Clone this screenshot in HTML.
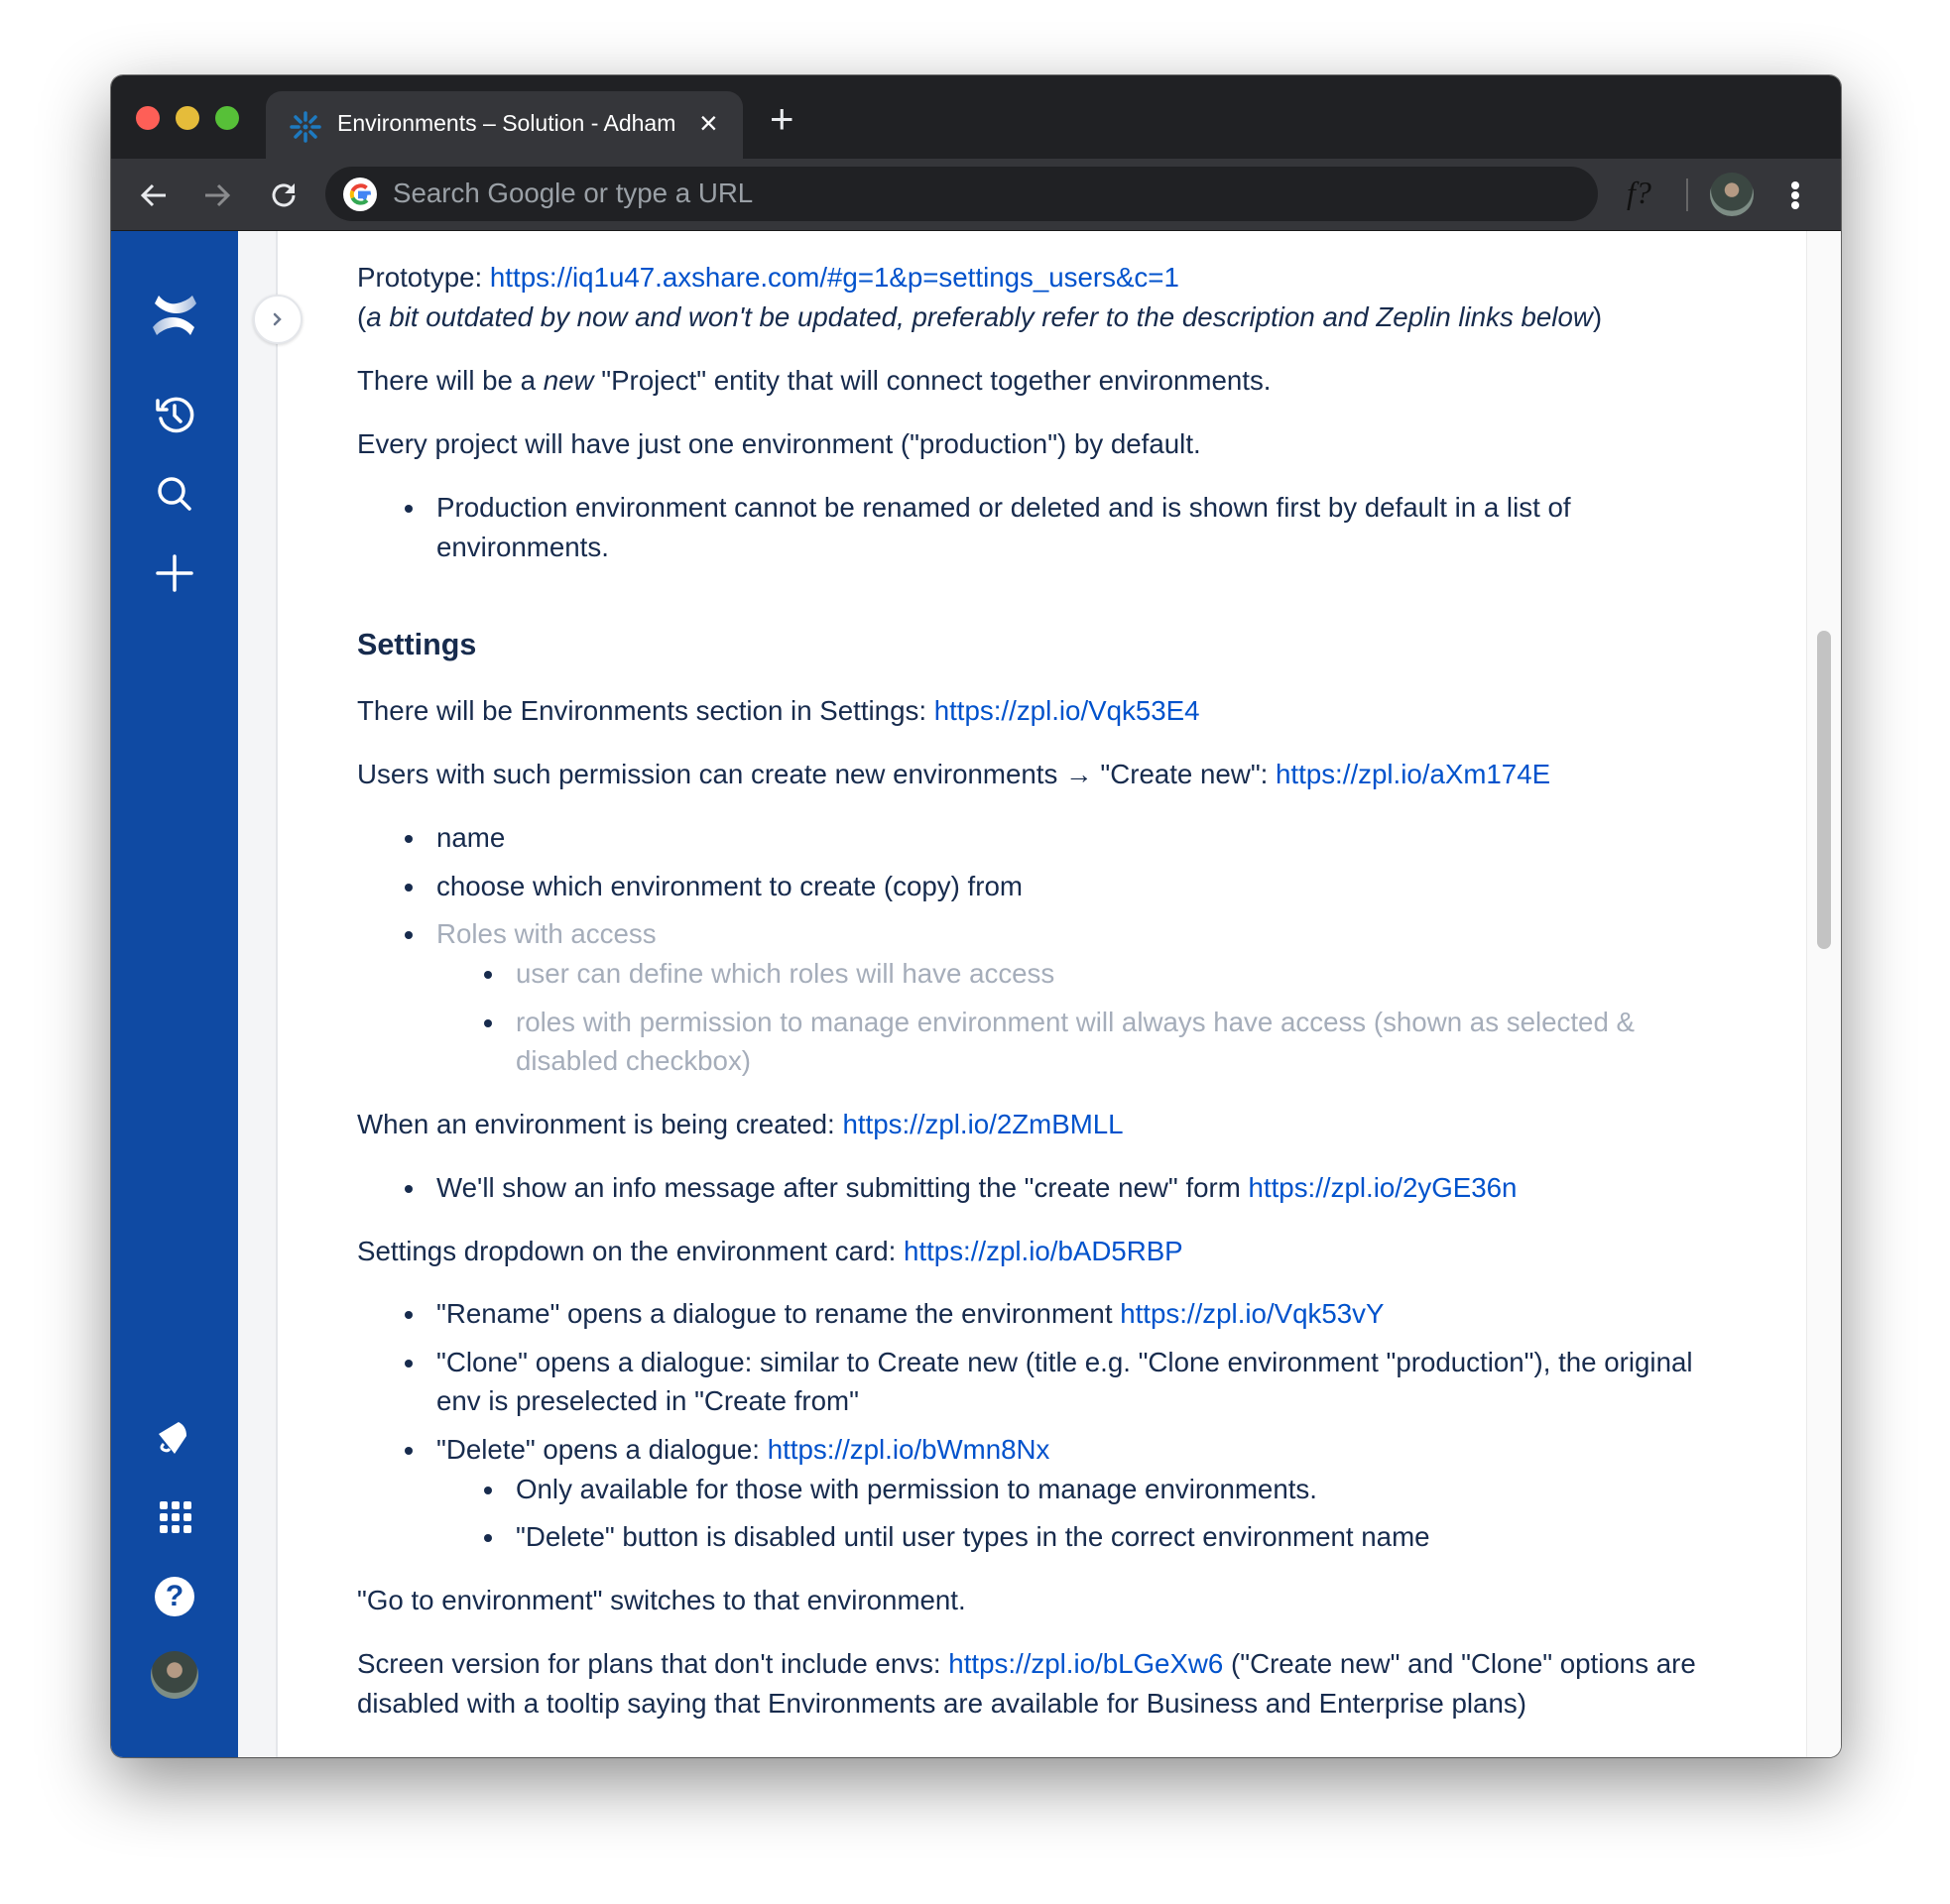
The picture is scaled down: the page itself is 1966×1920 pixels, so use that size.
<!DOCTYPE html>
<html><head><meta charset="utf-8">
<style>
*{margin:0;padding:0;box-sizing:border-box}
body{width:1966px;height:1920px;background:#fff;position:relative;overflow:hidden;font-family:"Liberation Sans",Arial,sans-serif}
.win{position:absolute;left:112px;top:76px;width:1744px;height:1696px;border-radius:12px;overflow:hidden;background:#fff;box-shadow:0 24px 70px rgba(0,0,0,.45),0 0 0 1px rgba(0,0,0,.5)}
.title{position:absolute;left:0;top:0;width:100%;height:84px;background:#202124}
.tab{position:absolute;left:156px;top:16px;width:481px;height:70px;background:#35363a;border-radius:16px 16px 0 0}
.toolbar{position:absolute;left:0;top:84px;width:100%;height:73px;background:#35363a;border-bottom:1px solid #1a1a1a}
.light{position:absolute;top:31px;width:24px;height:24px;border-radius:50%}
.omni{position:absolute;left:216px;top:8px;width:1283px;height:55px;border-radius:28px;background:#202124}
.side{position:absolute;left:0;top:157px;width:128px;height:1539px;background:#0f4aa3}
.strip{position:absolute;left:128px;top:157px;width:40px;height:1539px;background:#f4f5f7;border-right:2px solid #e4e6ea}
.content{position:absolute;left:168px;top:157px;width:1541px;height:1539px;background:#fff}
.track{position:absolute;left:1709px;top:157px;width:35px;height:1539px;background:#fafafa;border-left:1px solid #eaeaea}
.thumb{position:absolute;left:1720px;top:560px;width:14px;height:321px;border-radius:7px;background:#c3c3c3}
.l{position:absolute;font-size:27.7px;line-height:40px;color:#172b4d;white-space:nowrap}
.l a{color:#0052cc;text-decoration:none}
.g{color:#a5adba}
.b::before{content:"";position:absolute;left:-32px;top:17px;width:8px;height:8px;border-radius:50%;background:#172b4d}
h2{position:absolute;left:248px;font-size:30.5px;line-height:40px;color:#172b4d;font-weight:bold}
</style></head><body>
<div class="win">
 <div class="title">
  <div class="light" style="left:25px;background:#fe5f57"></div>
  <div class="light" style="left:65px;background:#e5bc3a"></div>
  <div class="light" style="left:105px;background:#57c038"></div>
  <div class="tab">
   <svg style="position:absolute;left:24px;top:20px" width="32" height="32" viewBox="0 0 32 32"><g stroke="#1e7ac0" stroke-width="3.5" stroke-linecap="round"><line x1="16" y1="2" x2="16" y2="9"/><line x1="16" y1="23" x2="16" y2="30"/><line x1="2" y1="16" x2="9" y2="16"/><line x1="23" y1="16" x2="30" y2="16"/><line x1="6" y1="6" x2="11" y2="11"/><line x1="21" y1="21" x2="26" y2="26"/><line x1="26" y1="6" x2="21" y2="11"/><line x1="11" y1="21" x2="6" y2="26"/></g><circle cx="16" cy="16" r="2.5" fill="#1e7ac0"/></svg>
   <div style="position:absolute;left:72px;top:19px;font-size:23px;color:#fff;white-space:nowrap;width:350px;overflow:hidden">Environments – Solution - Adham</div>
   <div style="position:absolute;left:437px;top:14px;font-size:32px;color:#fff">×</div>
  </div>
  <div style="position:absolute;left:664px;top:23px;font-size:42px;line-height:42px;color:#e8eaed">+</div>
 </div>
 <div class="toolbar">
  <svg style="position:absolute;left:28px;top:22px" width="30" height="30" viewBox="0 0 30 30"><path d="M27 15H4M14 5L4 15l10 10" fill="none" stroke="#e8eaed" stroke-width="3"/></svg>
  <svg style="position:absolute;left:92px;top:22px" width="30" height="30" viewBox="0 0 30 30"><path d="M3 15h23M16 5l10 10-10 10" fill="none" stroke="#8a8b8d" stroke-width="3"/></svg>
  <svg style="position:absolute;left:158px;top:21px" width="32" height="32" viewBox="0 0 32 32"><path d="M26 16a10 10 0 1 1-3-7.2" fill="none" stroke="#e8eaed" stroke-width="3"/><path d="M27 4v10H17z" fill="#e8eaed"/></svg>
  <div class="omni">
   <svg style="position:absolute;left:18px;top:11px" width="34" height="34" viewBox="0 0 34 34"><circle cx="17" cy="17" r="17" fill="#fff"/><path d="M26 17.5c0-.7-.1-1.3-.2-1.9H17v3.6h5.1a4.4 4.4 0 0 1-1.9 2.9" fill="none" stroke="#4285f4" stroke-width="4"/><path d="M24 23a9 9 0 0 1-14.5-2.5" fill="none" stroke="#34a853" stroke-width="4"/><path d="M9.5 20.5a9 9 0 0 1 0-7" fill="none" stroke="#fbbc05" stroke-width="4"/><path d="M9.5 13.5A9 9 0 0 1 23.5 10.5" fill="none" stroke="#ea4335" stroke-width="4"/></svg>
   <div style="position:absolute;left:68px;top:11px;font-size:27.7px;color:#9aa0a6">Search Google or type a URL</div>
  </div>
  <div style="position:absolute;left:1528px;top:16px;font-family:'Liberation Serif',serif;font-style:italic;font-size:32px;color:#111">f?</div>
  <div style="position:absolute;left:1588px;top:20px;width:2px;height:33px;background:#666"></div>
  <div style="position:absolute;left:1612px;top:14px;width:44px;height:44px;border-radius:50%;background:radial-gradient(circle at 50% 40%,#b59a84 0 20%,#3b4742 22% 60%,#7d8d85 62%)"></div>
  <div style="position:absolute;left:1694px;top:23px;width:8px;height:8px;border-radius:50%;background:#fff;box-shadow:0 10px 0 #fff,0 20px 0 #fff"></div>
 </div>
 <div class="side">
  <svg style="position:absolute;left:40px;top:61px" width="48" height="48" viewBox="0 0 48 48"><defs><linearGradient id="lg" x1="0" x2="1"><stop offset="0" stop-color="#fff" stop-opacity=".6"/><stop offset=".6" stop-color="#fff"/></linearGradient><linearGradient id="lg2" x1="1" x2="0"><stop offset="0" stop-color="#fff" stop-opacity=".6"/><stop offset=".6" stop-color="#fff"/></linearGradient></defs><path d="M8 4q8 10 18 8t16-8l4 8q-8 10-20 10T4 12z" fill="url(#lg2)"/><path d="M40 44q-8-10-18-8T6 44l-4-8q8-10 20-10t22 10z" fill="url(#lg)"/></svg>
  <svg style="position:absolute;left:44px;top:165px" width="40" height="40" viewBox="0 0 40 40"><path d="M8 12A16 16 0 1 1 6 24" fill="none" stroke="#fff" stroke-width="3.5" stroke-linecap="round"/><path d="M3 6v9h9" fill="none" stroke="#fff" stroke-width="3.5" stroke-linecap="round" stroke-linejoin="round"/><path d="M20 11v10l6 6" fill="none" stroke="#fff" stroke-width="3.5" stroke-linecap="round"/></svg>
  <svg style="position:absolute;left:44px;top:245px" width="40" height="40" viewBox="0 0 40 40"><circle cx="17" cy="17" r="12" fill="none" stroke="#fff" stroke-width="3.5"/><path d="M26 26l9 9" stroke="#fff" stroke-width="3.5" stroke-linecap="round"/></svg>
  <svg style="position:absolute;left:44px;top:325px" width="40" height="40" viewBox="0 0 40 40"><path d="M20 3v34M3 20h34" stroke="#fff" stroke-width="3.5" stroke-linecap="round"/></svg>
  <svg style="position:absolute;left:44px;top:1197px" width="40" height="40" viewBox="0 0 40 40"><path d="M4 16l20-12q8 4 8 14l-12 18z" fill="#fff"/><path d="M9 26q-4 4 0 6t6-1" fill="none" stroke="#fff" stroke-width="3"/></svg>
  <div style="position:absolute;left:49px;top:1281px;width:8px;height:8px;background:#fff;border-radius:2px;box-shadow:12px 0 #fff,24px 0 #fff,0 12px #fff,12px 12px #fff,24px 12px #fff,0 24px #fff,12px 24px #fff,24px 24px #fff"></div>
  <div style="position:absolute;left:44px;top:1357px;width:40px;height:40px;border-radius:50%;background:#fff;color:#0f4aa3;font-weight:bold;font-size:30px;text-align:center;line-height:40px">?</div>
  <div style="position:absolute;left:40px;top:1432px;width:48px;height:48px;border-radius:50%;background:radial-gradient(circle at 50% 40%,#b59a84 0 20%,#3b4742 22% 60%,#7d8d85 62%)"></div>
 </div>
 <div class="strip"></div>
 <div class="content"></div>
 <div class="track"></div>
 <div class="thumb"></div>
 <div style="position:absolute;left:143px;top:221px;width:50px;height:50px;border-radius:50%;background:#fff;border:2px solid #e4e6ea;box-shadow:0 1px 3px rgba(0,0,0,.15)"><svg style="position:absolute;left:15px;top:15px" width="16" height="16" viewBox="0 0 16 16"><path d="M5 3l5 5-5 5" fill="none" stroke="#6b778c" stroke-width="2.5" stroke-linecap="round"/></svg></div>

 <div class="l" style="left:248px;top:184px">Prototype: <a>https://iq1u47.axshare.com/#g=1&amp;p=settings_users&amp;c=1</a></div>
 <div class="l" style="left:248px;top:224px">(<i>a bit outdated by now and won't be updated, preferably refer to the description and Zeplin links below</i>)</div>
 <div class="l" style="left:248px;top:288px">There will be a <i>new</i> "Project" entity that will connect together environments.</div>
 <div class="l" style="left:248px;top:352px">Every project will have just one environment ("production") by default.</div>
 <div class="l b" style="left:328px;top:416px">Production environment cannot be renamed or deleted and is shown first by default in a list of</div>
 <div class="l" style="left:328px;top:456px">environments.</div>
 <h2 style="top:554px">Settings</h2>
 <div class="l" style="left:248px;top:621px">There will be Environments section in Settings: <a>https://zpl.io/Vqk53E4</a></div>
 <div class="l" style="left:248px;top:685px">Users with such permission can create new environments → "Create new": <a>https://zpl.io/aXm174E</a></div>
 <div class="l b" style="left:328px;top:749px">name</div>
 <div class="l b" style="left:328px;top:798px">choose which environment to create (copy) from</div>
 <div class="l b g" style="left:328px;top:846px">Roles with access</div>
 <div class="l b g" style="left:408px;top:886px">user can define which roles will have access</div>
 <div class="l b g" style="left:408px;top:935px">roles with permission to manage environment will always have access (shown as selected &amp;</div>
 <div class="l g" style="left:408px;top:974px">disabled checkbox)</div>
 <div class="l" style="left:248px;top:1038px">When an environment is being created: <a>https://zpl.io/2ZmBMLL</a></div>
 <div class="l b" style="left:328px;top:1102px">We'll show an info message after submitting the "create new" form <a>https://zpl.io/2yGE36n</a></div>
 <div class="l" style="left:248px;top:1166px">Settings dropdown on the environment card: <a>https://zpl.io/bAD5RBP</a></div>
 <div class="l b" style="left:328px;top:1229px">"Rename" opens a dialogue to rename the environment <a>https://zpl.io/Vqk53vY</a></div>
 <div class="l b" style="left:328px;top:1278px">"Clone" opens a dialogue: similar to Create new (title e.g. "Clone environment "production"), the original</div>
 <div class="l" style="left:328px;top:1317px">env is preselected in "Create from"</div>
 <div class="l b" style="left:328px;top:1366px">"Delete" opens a dialogue: <a>https://zpl.io/bWmn8Nx</a></div>
 <div class="l b" style="left:408px;top:1406px">Only available for those with permission to manage environments.</div>
 <div class="l b" style="left:408px;top:1454px">"Delete" button is disabled until user types in the correct environment name</div>
 <div class="l" style="left:248px;top:1518px">"Go to environment" switches to that environment.</div>
 <div class="l" style="left:248px;top:1582px">Screen version for plans that don't include envs: <a>https://zpl.io/bLGeXw6</a> ("Create new" and "Clone" options are</div>
 <div class="l" style="left:248px;top:1622px">disabled with a tooltip saying that Environments are available for Business and Enterprise plans)</div>
</div>
</body></html>
